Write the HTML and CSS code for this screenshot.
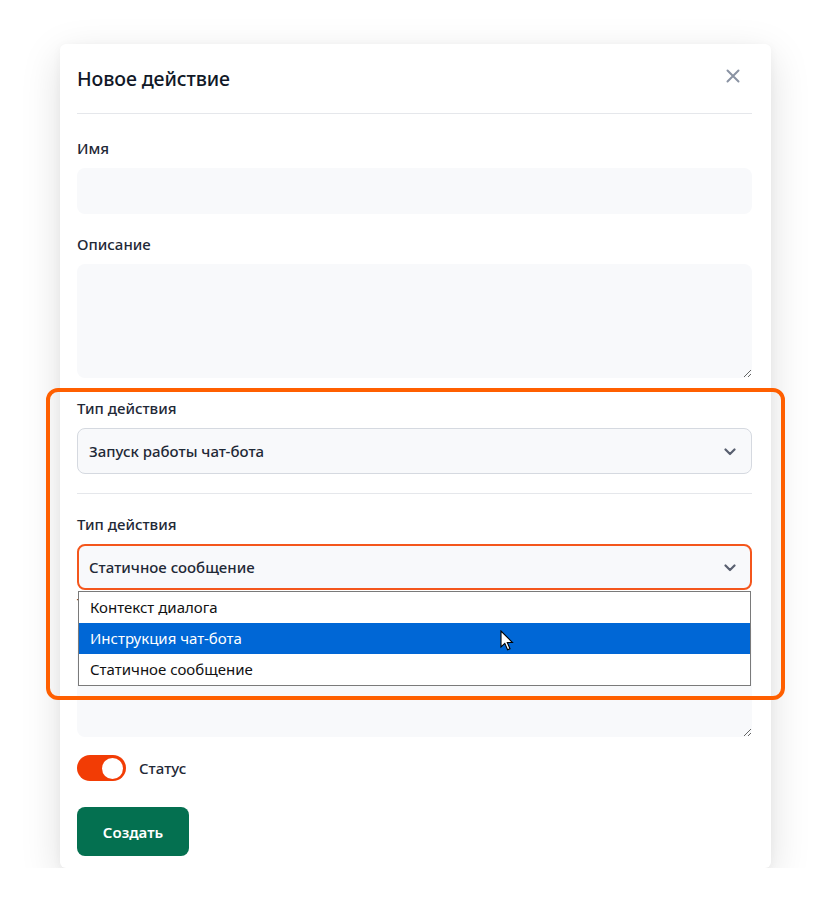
FILE: index.html
```html
<!DOCTYPE html>
<html lang="ru">
<head>
<meta charset="utf-8">
<title>Новое действие</title>
<link rel="stylesheet" href="styles.css">
</head>
<body>
<div class="modal">
  <div class="modal-header">
    <h2 class="modal-title">Новое действие</h2>
    <button class="close-btn" aria-label="Закрыть">
      <svg width="14" height="14" viewBox="0 0 14 14"><path d="M1.5 1.5 L12.5 12.5 M12.5 1.5 L1.5 12.5" stroke="#8a93a3" stroke-width="2" stroke-linecap="round"/></svg>
    </button>
  </div>

  <div class="field field-first">
    <label class="label">Имя</label>
    <input class="input" type="text">
  </div>

  <div class="field">
    <label class="label">Описание</label>
    <textarea class="textarea"></textarea>
  </div>

  <div class="field">
    <label class="label">Тип действия</label>
    <div class="select">
      <span>Запуск работы чат-бота</span>
      <svg class="chev" width="12" height="8" viewBox="0 0 12 8"><path d="M1.5 1.5 L6 6 L10.5 1.5" fill="none" stroke="#596070" stroke-width="2.2" stroke-linecap="round" stroke-linejoin="round"/></svg>
    </div>
  </div>

  <div class="divider"></div>

  <div class="field field-after-divider">
    <label class="label">Тип действия</label>
    <div class="select-wrap">
      <div class="select select-focus">
        <span>Статичное сообщение</span>
        <svg class="chev" width="12" height="8" viewBox="0 0 12 8"><path d="M1.5 1.5 L6 6 L10.5 1.5" fill="none" stroke="#596070" stroke-width="2.2" stroke-linecap="round" stroke-linejoin="round"/></svg>
      </div>
      <ul class="dropdown">
        <li>Контекст диалога</li>
        <li class="active">Инструкция чат-бота</li>
        <li>Статичное сообщение</li>
      </ul>
      <svg class="cursor" width="14" height="22" viewBox="0 0 14 22"><path d="M1 1 L1 17 L4.8 13.4 L7.6 19.8 L10 18.8 L7.3 12.5 L12.4 12.5 Z" fill="#fff" stroke="#000" stroke-width="1.1" stroke-linejoin="miter"/></svg>
    </div>
  </div>

  <div class="field field-tight">
    <label class="label">Текст сообщения</label>
    <textarea class="textarea"></textarea>
  </div>

  <div class="status-row">
    <span class="toggle"><span class="knob"></span></span>
    <span class="status-label">Статус</span>
  </div>

  <button class="btn-primary">Создать</button>

  <div class="highlight"></div>
</div>
</body>
</html>
```

FILE: styles.css
```css
* { box-sizing: border-box; }

html, body {
  margin: 0;
  padding: 0;
  background: #ffffff;
}

body {
  font-family: "Noto Sans", "Open Sans", sans-serif;
  color: #1f2937;
  padding: 44px 0 0 60px;
}

.modal {
  position: relative;
  width: 711px;
  height: 824px;
  background: #ffffff;
  border-radius: 6px;
  box-shadow: 0 12px 40px rgba(0, 0, 0, 0.13), 0 2px 10px rgba(0, 0, 0, 0.04);
  padding: 0 19px 12px 17px;
  display: flex;
  flex-direction: column;
  align-items: stretch;
}

.modal-header {
  height: 70px;
  display: flex;
  align-items: center;
  justify-content: space-between;
  border-bottom: 1px solid #e5e7eb;
}

.modal-title {
  margin: 0;
  font-size: 19.5px;
  font-weight: 500;
  color: #111827;
  letter-spacing: -0.1px;
}

.close-btn {
  border: 0;
  background: none;
  padding: 0;
  width: 14px;
  height: 14px;
  margin-right: 12px;
  margin-top: -6px;
  display: flex;
  cursor: pointer;
}

.field {
  display: flex;
  flex-direction: column;
  margin-top: 20px;
}

.field-first { margin-top: 24px; }
.field-after-divider { margin-top: 20px; }
.field-tight { margin-top: 3px; }

.label {
  font-size: 15px;
  font-weight: 500;
  line-height: 20px;
  color: #1f2937;
  margin-bottom: 10px;
}

.input {
  height: 46px;
  border: 0;
  border-radius: 8px;
  background: #f8f9fb;
  outline: none;
  font: inherit;
}

.textarea {
  height: 114px;
  border: 0;
  border-radius: 8px;
  background: #f8f9fb;
  resize: vertical;
  outline: none;
  font: inherit;
  display: block;
}

.select {
  height: 46px;
  border: 1px solid #d5d9e0;
  border-radius: 8px;
  background: #f8f9fb;
  display: flex;
  align-items: center;
  justify-content: space-between;
  padding: 0 15px 0 11px;
  font-size: 15px;
  font-weight: 500;
  color: #1f2937;
}

.select-focus {
  border: 2px solid #f4561c;
  padding-left: 10px;
  padding-right: 14px;
}

.chev { display: block; margin-top: 1px; }

.divider {
  height: 1px;
  background: #e5e7eb;
  margin-top: 19px;
}

.select-wrap {
  position: relative;
}

.dropdown {
  position: absolute;
  left: 1px;
  right: 1px;
  top: 47px;
  margin: 0;
  padding: 0;
  list-style: none;
  background: #ffffff;
  border: 1px solid #7a7a7a;
  z-index: 5;
}

.dropdown li {
  height: 31px;
  line-height: 31px;
  padding-left: 11px;
  font-size: 15px;
  color: #111;
}

.dropdown li.active {
  background: #0067d6;
  color: #ffffff;
}

.cursor {
  position: absolute;
  left: 423px;
  top: 86px;
  z-index: 6;
}

.status-row {
  display: flex;
  align-items: center;
  gap: 13px;
  margin-top: 18px;
}

.toggle {
  width: 49px;
  height: 26px;
  border-radius: 13px;
  background: #f23c05;
  display: flex;
  align-items: center;
  justify-content: flex-end;
  padding-right: 3px;
}

.knob {
  width: 21px;
  height: 21px;
  border-radius: 50%;
  background: #ffffff;
}

.status-label {
  font-size: 15px;
  font-weight: 500;
  color: #1f2937;
}

.btn-primary {
  align-self: flex-start;
  margin-top: 26px;
  width: 112px;
  height: 49px;
  border: 0;
  border-radius: 8px;
  background: #047050;
  color: #ffffff;
  font-family: "Noto Sans", sans-serif;
  font-size: 15px;
  font-weight: 600;
  cursor: pointer;
}

.highlight {
  position: absolute;
  left: -14px;
  top: 344px;
  width: 739px;
  height: 312px;
  border: 4px solid #ff5f00;
  border-radius: 12px;
  pointer-events: none;
  z-index: 10;
}
```
